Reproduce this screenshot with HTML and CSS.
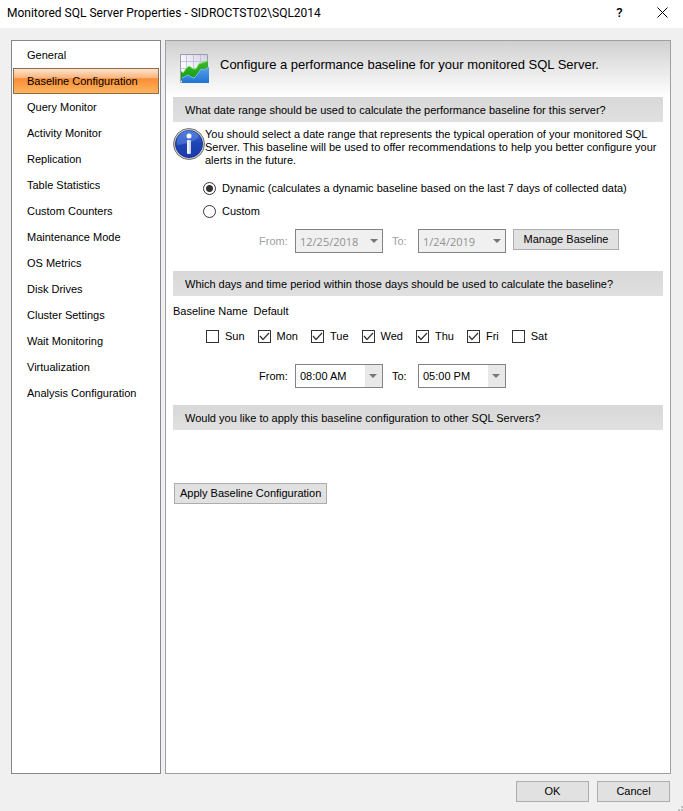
FILE: index.html
```
<!DOCTYPE html>
<html lang="en">
<head>
  <meta charset="UTF-8" />
  <meta name="viewport" content="width=device-width, initial-scale=1" />
  <title>Monitored SQL Server Properties</title>
  <link rel="stylesheet" href="styles.css">
</head>
<body>

  <header class="title-bar">
    <h1>Monitored SQL Server Properties - SIDROCTST02\SQL2014</h1>
    <button type="button" class="title-btn" aria-label="Help">?</button>
    <button type="button" class="title-btn" aria-label="Close">
      <svg width="11" height="11" viewBox="0 0 11 11"><path d="M0.5 0.5L10.5 10.5M10.5 0.5L0.5 10.5" stroke="#000" fill="none" /></svg>
    </button>
  </header>

  <div class="window-body">
    <nav class="sidebar">
      <a href="#">General</a>
      <a href="#" class="active">Baseline Configuration</a>
      <a href="#">Query Monitor</a>
      <a href="#">Activity Monitor</a>
      <a href="#">Replication</a>
      <a href="#">Table Statistics</a>
      <a href="#">Custom Counters</a>
      <a href="#">Maintenance Mode</a>
      <a href="#">OS Metrics</a>
      <a href="#">Disk Drives</a>
      <a href="#">Cluster Settings</a>
      <a href="#">Wait Monitoring</a>
      <a href="#">Virtualization</a>
      <a href="#">Analysis Configuration</a>
    </nav>

    <main class="panel">
      <div class="panel-header">
        <svg class="chart-icon" width="32" height="32" viewBox="0 0 32 32">
          <defs>
            <linearGradient id="paper" x1="1" y1="0" x2="0" y2="1">
              <stop offset="0" stop-color="#cfcfe4" />
              <stop offset="0.6" stop-color="#fafaff" />
            </linearGradient>
            <linearGradient id="green" x1="0" y1="0" x2="0" y2="1">
              <stop offset="0" stop-color="#3fb82c" />
              <stop offset="1" stop-color="#109a12" />
            </linearGradient>
            <linearGradient id="blue" x1="0" y1="0" x2="0" y2="1">
              <stop offset="0" stop-color="#5a9fe6" />
              <stop offset="1" stop-color="#1e74d6" />
            </linearGradient>
          </defs>
          <path d="M1.5 1.5H28.5V29.5H1.5Z" fill="url(#paper)" stroke="#9c9cb0" />
          <path d="M7.5 2V29M14.5 2V29M21.5 2V29M2 8.500H28M2 15.500H28M2 22.500H28" stroke="#c4c4d4" fill="none" />
          <path d="M2 18L4 20L7 16L10 13L14 16H17L20 11L23 10L29 8V26H5L2 28Z" fill="url(#green)" />
          <path d="M2 18L4 20L7 16L10 13L14 16H17L20 11L23 10L29 8" fill="none" stroke="#6cdc48" />
          <path d="M3 25L9 22L12 24L15 25L18 22L22 16L25 17L30 14V30H3Z" fill="url(#blue)" />
          <path d="M3 25L9 22L12 24L15 25L18 22L22 16L25 17L30 14" fill="none" stroke="#78b8f4" />
        </svg>
        <h2>Configure a performance baseline for your monitored SQL Server.</h2>
      </div>

      <section>
        <h3>What date range should be used to calculate the performance baseline for this server?</h3>
        <div class="info">
          <svg width="32" height="32" viewBox="0 0 32 32">
            <defs>
              <linearGradient id="ball" x1="0" y1="0" x2="0" y2="1">
                <stop offset="0" stop-color="#3d6cd4" />
                <stop offset="0.5" stop-color="#1c44b4" />
                <stop offset="1" stop-color="#1b3bb0" />
              </linearGradient>
              <linearGradient id="stem" x1="0" y1="0" x2="1" y2="0">
                <stop offset="0" stop-color="#fff" />
                <stop offset="1" stop-color="#c4cce0" />
              </linearGradient>
            </defs>
            <circle cx="16" cy="16" r="15.500" fill="#c8c8c8" stroke="#777" />
            <circle cx="16" cy="16" r="13.500" fill="url(#ball)" stroke="#1b3488" />
            <path d="M4 17A12 12 0 0 1 26 8Q22 15 4 17Z" fill="#6b94e8" opacity="0.45" />
            <circle cx="16" cy="8" r="2.500" fill="#fff" />
            <rect x="14" y="12" width="4" height="14" rx="1" fill="url(#stem)" />
          </svg>
          <p>You should select a date range that represents the typical operation of your monitored SQL Server. This baseline will be used to offer recommendations to help you better configure your alerts in the future.</p>
        </div>

        <div class="radios">
          <label><input type="radio" name="range" checked>Dynamic (calculates a dynamic baseline based on the last 7 days of collected data)</label>
          <label><input type="radio" name="range">Custom</label>
        </div>

        <div class="range-row disabled">
          <label for="date-from">From:</label>
          <select id="date-from" disabled><option>12/25/2018</option></select>
          <label for="date-to">To:</label>
          <select id="date-to" disabled><option>1/24/2019</option></select>
          <button type="button" class="btn btn-manage">Manage Baseline</button>
        </div>
      </section>

      <section>
        <h3>Which days and time period within those days should be used to calculate the baseline?</h3>
        <div class="baseline-name"><span>Baseline Name</span><span>Default</span></div>
        <div class="days">
          <label><input type="checkbox">Sun</label>
          <label><input type="checkbox" checked>Mon</label>
          <label><input type="checkbox" checked>Tue</label>
          <label><input type="checkbox" checked>Wed</label>
          <label><input type="checkbox" checked>Thu</label>
          <label><input type="checkbox" checked>Fri</label>
          <label><input type="checkbox">Sat</label>
        </div>
        <div class="range-row">
          <label for="time-from">From:</label>
          <select id="time-from"><option>08:00 AM</option></select>
          <label for="time-to">To:</label>
          <select id="time-to"><option>05:00 PM</option></select>
        </div>
      </section>

      <section>
        <h3>Would you like to apply this baseline configuration to other SQL Servers?</h3>
        <button type="button" class="btn btn-apply">Apply Baseline Configuration</button>
      </section>
    </main>
  </div>

  <footer>
    <button type="button" class="btn">OK</button>
    <button type="button" class="btn">Cancel</button>
    <svg class="grip" width="5" height="5" viewBox="0 0 5 5"><path d="M3 0H5V2H3ZM0 3H2V5H0ZM3 3H5V5H3Z" fill="#bfbfbf" /></svg>
  </footer>

</body>
</html>
```
FILE: styles.css
```
* {
  box-sizing: border-box;
}

body {
  margin: 0;
  min-height: 100vh;
  display: flex;
  flex-direction: column;
  background: #f0f0f0;
  color: #000;
  font-family: "Liberation Sans", Arial, sans-serif;
  font-size: 11px;
  line-height: 13px;
}

h1,
h2,
h3,
p {
  margin: 0;
  font-weight: normal;
}

button,
select,
input {
  font: inherit;
  color: inherit;
  margin: 0;
}

.title-bar {
  display: flex;
  align-items: center;
  height: 28px;
  padding-left: 7px;
  background: #fff;
  font-family: Roboto, "Open Sans", sans-serif;
}

.title-bar h1 {
  flex: 1;
  font-size: 12px;
  line-height: 24px;
  padding-bottom: 2px;
}

.title-btn {
  display: flex;
  align-items: center;
  justify-content: center;
  width: 45px;
  height: 26px;
  padding: 0 0 3px;
  border: none;
  background: none;
  font-size: 13px;
  font-weight: 500;
}

.title-btn:last-child {
  width: 41px;
}

.window-body {
  flex: 1;
  display: flex;
  gap: 4px;
  padding: 12px 12px 0 11px;
}

.sidebar {
  width: 150px;
  padding: 1px;
  background: #fff;
  border: 1px solid #828790;
}

.sidebar a {
  display: block;
  height: 26px;
  padding-left: 13px;
  border: 1px solid transparent;
  line-height: 24px;
  color: #000;
  text-decoration: none;
}

.sidebar a.active {
  border-color: #8f6d48;
  background: linear-gradient(#fde3cd, #fbb47c 38%, #f98d36 40%, #ffb55f);
}

.panel {
  flex: 1;
  padding: 0 7px;
  background: linear-gradient(#d0d0d0, #fff 56px);
  border: 1px solid #a0a0a0;
}

.panel-header {
  display: flex;
  align-items: center;
  gap: 9px;
  height: 56px;
  padding-left: 6px;
}

.panel-header h2 {
  font-size: 13px;
  line-height: 16px;
  padding-bottom: 8px;
}

.panel h3 {
  height: 25px;
  padding-left: 12px;
  background: linear-gradient(#d8d8d8, #e0e0e0);
  font-size: 11px;
  line-height: 26px;
}

.info {
  display: flex;
  padding-top: 6px;
}

.info svg {
  flex: none;
}

.info p {
  max-width: 458px;
  line-height: 13px;
}

.radios {
  display: grid;
  gap: 9px;
  padding: 14px 0 0 30px;
}

.radios label,
.days label {
  display: flex;
  align-items: center;
  gap: 6px;
  height: 14px;
}

.radios input,
.days input {
  appearance: none;
  width: 13px;
  height: 13px;
  border: 1px solid #333;
  background: #fff;
}

.radios input {
  border-radius: 50%;
}

.radios input:checked {
  background: radial-gradient(circle, #333 3px, #fff 4px);
}

.days input:checked {
  background: url('data:image/svg+xml,<svg xmlns="http://www.w3.org/2000/svg" width="11" height="11"><path d="M1 5L4 8.500L10 2" fill="none" stroke="%23333" stroke-width="1.2"/></svg>');
}

.range-row {
  display: flex;
  align-items: center;
  padding-left: 86px;
}

.range-row label[for$="from"] {
  width: 36px;
}

.range-row label[for$="to"] {
  width: 35px;
  padding-left: 9px;
}

.range-row select {
  appearance: none;
  width: 88px;
  height: 24px;
  padding: 0 18px 0 4px;
  border: 1px solid #838383;
  border-radius: 0;
  background: url('data:image/svg+xml,<svg xmlns="http://www.w3.org/2000/svg" width="17" height="22"><path d="M0 0H17V22H0Z" fill="%23e8e8e8"/><path d="M4 9H12L8 13Z" fill="%23777"/></svg>') right center no-repeat #fff;
  opacity: 1;
}

.disabled {
  margin: 11px 0 18px;
  height: 24px;
}

.disabled label {
  color: #a0a0a0;
}

.range-row.disabled select {
  color: #909090;
  background: url('data:image/svg+xml,<svg xmlns="http://www.w3.org/2000/svg" width="17" height="22"><path d="M5 9H13L9 13Z" fill="%23777"/></svg>') right center no-repeat #f0f0f0;
  font-family: "Open Sans", "Noto Sans", sans-serif;
}

.baseline-name {
  display: flex;
  gap: 6px;
  padding-top: 9px;
}

.days {
  display: flex;
  gap: 13px;
  padding: 11px 0 21px 33px;
}

.days + .range-row {
  margin-bottom: 17px;
}

.btn {
  height: 21px;
  padding: 0 5px;
  border: 1px solid #adadad;
  background: #e1e1e1;
}

.btn-manage {
  width: 106px;
  margin: 0 0 3px 7px;
}

.btn-apply {
  margin: 53px 0 0 1px;
}

footer {
  display: flex;
  justify-content: flex-end;
  gap: 8px;
  padding: 7px 0 9px;
}

footer .btn {
  width: 73px;
}

.grip {
  align-self: flex-end;
  margin: 0 0 -9px;
}
```
